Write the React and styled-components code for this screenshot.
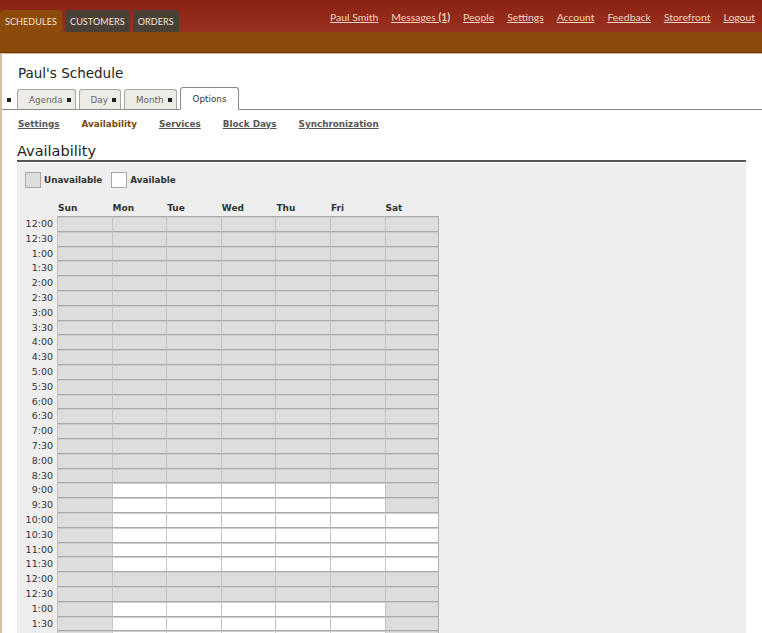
import React from "react";
import styled, { createGlobalStyle } from "styled-components";

const GlobalStyle = createGlobalStyle`
  html, body { margin: 0; padding: 0; background: #fff; }
  body { font-family: "DejaVu Sans", Verdana, sans-serif; color: #222; }
`;

const TopBar = styled.div`
  height: 32px;
  background: linear-gradient(#8a2213, #9a3120);
  display: flex;
  justify-content: space-between;
  align-items: flex-end;
`;

const MainNav = styled.nav`
  display: flex;
  align-items: flex-end;
  gap: 2px;
`;

const MainTab = styled.a`
  display: flex;
  align-items: center;
  height: 22px;
  padding: 0 5px;
  margin-right: ${(p) => (p.$gap ? "1px" : "0")};
  border-radius: 4px 4px 0 0;
  background: ${(p) => (p.$active ? "#8c4a0b" : "#4b4036")};
  color: #f2e4d6;
  font-family: Lato, "Open Sans", sans-serif;
  font-size: 9px;
  letter-spacing: 0.1px;
  text-transform: uppercase;
  text-decoration: none;
`;

const UserLinks = styled.div`
  display: flex;
  gap: 13px;
  align-self: center;
  padding-right: 7px;
  margin-top: 1px;
`;

const UserLink = styled.a`
  color: #f1d4c6;
  font-family: Lato, "Open Sans", sans-serif;
  font-size: 10.4px;
  text-decoration: underline;
  b { font-weight: bold; }
`;

const Band = styled.div`
  height: 20px;
  background: #8b4a0a;
  border-bottom: 1px solid #6a3a0c;
  box-shadow: 0 1px 0 #d2b88e;
`;

const Page = styled.div`
  border-left: 2px solid #cfc3a2;
  padding-top: 12px;
  min-height: 600px;
`;

const Title = styled.h1`
  margin: 0 0 5px 16px;
  font-size: 13.5px;
  font-weight: normal;
  color: #222;
  line-height: 16px;
`;

const TabRow = styled.div`
  display: flex;
  align-items: flex-end;
  gap: 3px;
  border-bottom: 1px solid #8a8a8a;
  padding-left: 5px;
  height: 23px;
`;

const Bullet = styled.span`
  width: 4px;
  height: 4px;
  background: #222;
  align-self: center;
  margin: 5px 3px 0 0;
`;

const ViewTab = styled.a`
  display: flex;
  align-items: center;
  gap: 4px;
  height: ${(p) => (p.$active ? "21px" : "19px")};
  padding: 0 ${(p) => (p.$active ? "12px" : "4px")} 0 ${(p) => (p.$active ? "12px" : "11px")};
  margin-bottom: -1px;
  border: 1px solid ${(p) => (p.$active ? "#8a8a8a" : "#a6a6a0")};
  border-bottom: ${(p) => (p.$active ? "1px solid #fff" : "1px solid #8a8a8a")};
  border-radius: 3px 3px 0 0;
  background: ${(p) => (p.$active ? "#fff" : "#ecebe5")};
  color: ${(p) => (p.$active ? "#333" : "#666")};
  font-size: 8.8px;
  text-decoration: none;
  &::after {
    content: ${(p) => (p.$active ? "none" : "''")};
    width: 4px;
    height: 4px;
    background: #222;
  }
`;

const SubNav = styled.nav`
  display: flex;
  gap: 22px;
  margin: 7px 0 0 16px;
  height: 14px;
  align-items: center;
`;

const SubLink = styled.a`
  font-size: 8.8px;
  font-weight: bold;
  color: ${(p) => (p.$active ? "#7a4a12" : "#555")};
  text-decoration: ${(p) => (p.$active ? "none" : "underline")};
`;

const Content = styled.div`
  margin: 11px 16px 0 15px;
`;

const Heading = styled.h2`
  margin: 0;
  font-size: 14.5px;
  font-weight: normal;
  color: #222;
  line-height: 18px;
  padding-bottom: 0;
  border-bottom: 2px solid #555;
`;

const Panel = styled.div`
  background: #eeeeee;
  margin-top: 1px;
  padding: 9px 8px 20px 8px;
`;

const Legend = styled.div`
  display: flex;
  align-items: center;
  gap: 3px;
  height: 16px;
`;

const Swatch = styled.span`
  width: 14px;
  height: 14px;
  border: 1px solid #a8a8a8;
  background: ${(p) => (p.$on ? "#fff" : "#dddddd")};
`;

const LegendLabel = styled.span`
  font-size: 8.8px;
  font-weight: bold;
  color: #333;
  margin-right: ${(p) => (p.$spaced ? "6px" : "0")};
`;

const Grid = styled.div`
  display: grid;
  grid-template-columns: 32px repeat(7, 54.6px);
  grid-template-rows: 14px;
  grid-auto-rows: 14.8px;
  margin-top: 14px;
`;

const DayHead = styled.div`
  font-size: 9px;
  font-weight: bold;
  color: #333;
  padding-left: 1px;
  line-height: 13px;
`;

const TimeLabel = styled.div`
  font-size: 9.5px;
  color: #333;
  text-align: right;
  padding-right: 4px;
  line-height: 15px;
`;

const Cell = styled.div`
  background: ${(p) => (p.$on ? "#ffffff" : "#dddddd")};
  border-top: 1px solid #a9a9a9;
  border-left: 1px solid #c4c4c4;
  border-right: ${(p) => (p.$last ? "1px solid #b0b0b0" : "none")};
  box-shadow: inset 0 1px 0 #cdcdcd;
`;

const days = ["Sun", "Mon", "Tue", "Wed", "Thu", "Fri", "Sat"];

const rows = Array.from({ length: 48 }, (_, i) => {
  const h = Math.floor(i / 2);
  const h12 = h % 12 === 0 ? 12 : h % 12;
  return { h, label: `${h12}:${i % 2 ? "30" : "00"}` };
});

const isAvailable = (day, h) => {
  if (day === 0) return false;
  if (day === 6) return h >= 10 && h < 12;
  return (h >= 9 && h < 12) || (h >= 13 && h < 17);
};

const links = ["Paul Smith", null, "People", "Settings", "Account", "Feedback", "Storefront", "Logout"];

export default function App() {
  return (
    <>
      <GlobalStyle />
      <TopBar>
        <MainNav>
          <MainTab $active $gap>Schedules</MainTab>
          <MainTab $gap>Customers</MainTab>
          <MainTab>Orders</MainTab>
        </MainNav>
        <UserLinks>
          {links.map((l, i) =>
            l ? (
              <UserLink key={i}>{l}</UserLink>
            ) : (
              <UserLink key={i}>
                Messages <b>(1)</b>
              </UserLink>
            )
          )}
        </UserLinks>
      </TopBar>
      <Band />
      <Page>
        <Title>Paul's Schedule</Title>
        <TabRow>
          <Bullet />
          <ViewTab>Agenda</ViewTab>
          <ViewTab>Day</ViewTab>
          <ViewTab>Month</ViewTab>
          <ViewTab $active>Options</ViewTab>
        </TabRow>
        <SubNav>
          <SubLink>Settings</SubLink>
          <SubLink $active>Availability</SubLink>
          <SubLink>Services</SubLink>
          <SubLink>Block Days</SubLink>
          <SubLink>Synchronization</SubLink>
        </SubNav>
        <Content>
          <Heading>Availability</Heading>
          <Panel>
            <Legend>
              <Swatch />
              <LegendLabel $spaced>Unavailable</LegendLabel>
              <Swatch $on />
              <LegendLabel>Available</LegendLabel>
            </Legend>
            <Grid>
              <div />
              {days.map((d) => (
                <DayHead key={d}>{d}</DayHead>
              ))}
              {rows.map((r, i) => (
                <React.Fragment key={i}>
                  <TimeLabel>{r.label}</TimeLabel>
                  {days.map((d, di) => (
                    <Cell key={d} $on={isAvailable(di, r.h)} $last={di === 6} />
                  ))}
                </React.Fragment>
              ))}
            </Grid>
          </Panel>
        </Content>
      </Page>
    </>
  );
}
